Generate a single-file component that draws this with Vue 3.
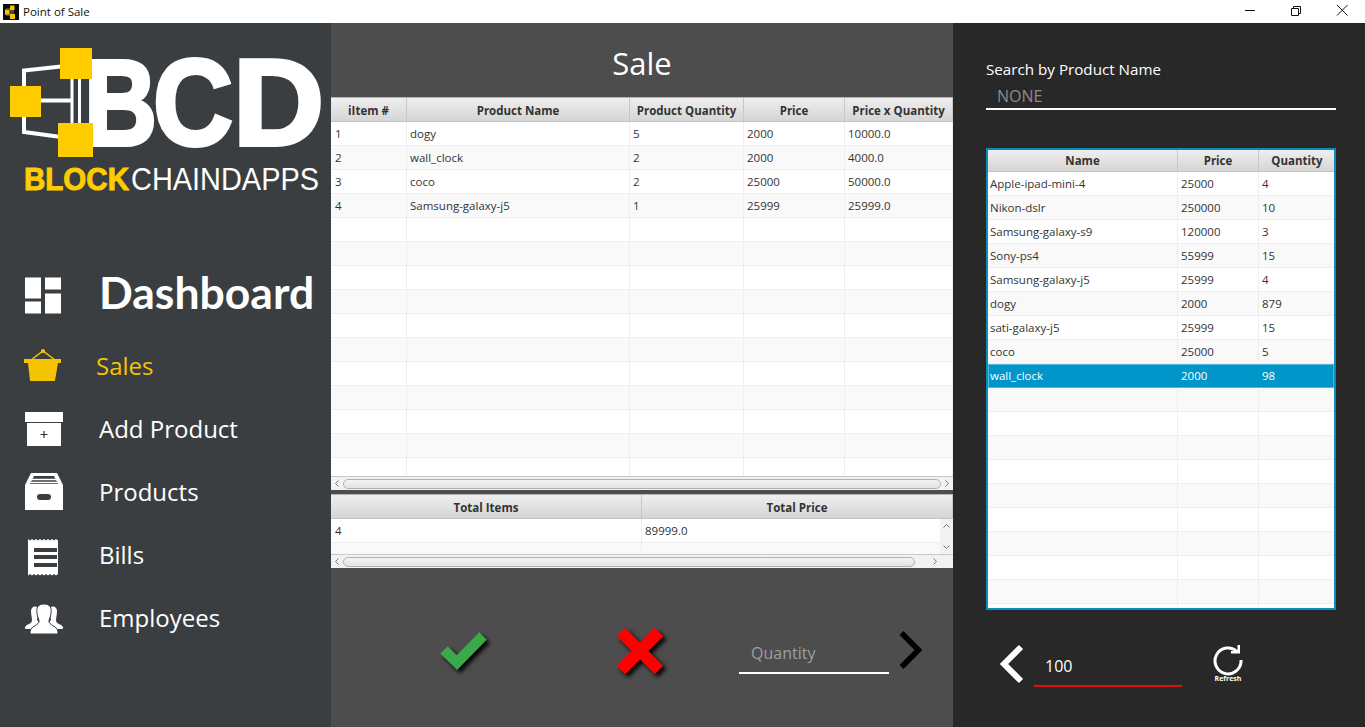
<script setup>
import { computed } from 'vue'

const navItems = [
  { key: 'dash', label: 'Dashboard' },
  { key: 'sales', label: 'Sales' },
  { key: 'add', label: 'Add Product' },
  { key: 'products', label: 'Products' },
  { key: 'bills', label: 'Bills' },
  { key: 'employees', label: 'Employees' }
]

const saleCols = [
  { title: 'iItem #', w: 76 },
  { title: 'Product Name', w: 223 },
  { title: 'Product Quantity', w: 114 },
  { title: 'Price', w: 101 },
  { title: 'Price x Quantity', w: 108 }
]
const saleRows = [
  ['1', 'dogy', '5', '2000', '10000.0'],
  ['2', 'wall_clock', '2', '2000', '4000.0'],
  ['3', 'coco', '2', '25000', '50000.0'],
  ['4', 'Samsung-galaxy-j5', '1', '25999', '25999.0']
]

const totalCols = [
  { title: 'Total Items', w: 311 },
  { title: 'Total Price', w: 311 }
]

const stockCols = [
  { title: 'Name', w: 190 },
  { title: 'Price', w: 81 },
  { title: 'Quantity', w: 77 }
]
const stockRows = [
  ['Apple-ipad-mini-4', '25000', '4'],
  ['Nikon-dslr', '250000', '10'],
  ['Samsung-galaxy-s9', '120000', '3'],
  ['Sony-ps4', '55999', '15'],
  ['Samsung-galaxy-j5', '25999', '4'],
  ['dogy', '2000', '879'],
  ['sati-galaxy-j5', '25999', '15'],
  ['coco', '25000', '5'],
  ['wall_clock', '2000', '98']
]

const gridOf = (cols) => ({ gridTemplateColumns: cols.map((c) => c.w + 'px').join(' ') })
const fill = (rows, cols, n) => {
  const out = rows.slice()
  while (out.length < n) out.push(cols.map(() => ''))
  return out
}
const saleAll = computed(() => fill(saleRows, saleCols, 15))
const stockAll = computed(() => fill(stockRows, stockCols, 19))
</script>

<template>
  <div class="window">
    <header class="titlebar">
      <svg class="app-icon" viewBox="0 0 16 16">
        <rect width="16" height="16" fill="#0b0b0b" />
        <path d="M3 5h5M3 5v6h5M8 4v8M10 4v8" stroke="#8a8a8a" stroke-width="1" fill="none" />
        <rect x="7" y="1.5" width="4.5" height="4.5" fill="#f7c600" />
        <rect x="2" y="6" width="4.5" height="4.5" fill="#f7c600" />
        <rect x="7" y="10" width="5" height="5" fill="#f7c600" />
      </svg>
      <span class="app-title">Point of Sale</span>
      <div class="win-btns">
        <svg viewBox="0 0 46 23"><path d="M18 10.5h10" stroke="#111" fill="none" /></svg>
        <svg viewBox="0 0 46 23">
          <path d="M18.5 8.5h7v7h-7zM20.5 8.5v-2h7v7h-2" stroke="#111" fill="none" />
        </svg>
        <svg viewBox="0 0 46 23"><path d="M18 5l10.500 10.500M28.500 5L18 15.500" stroke="#111" fill="none" /></svg>
      </div>
    </header>

    <div class="panes">
      <aside class="sidebar">
        <svg class="logo" viewBox="0 23 331 180">
          <path d="M61 66.500L24 70.500V132L61 137" fill="none" stroke="#fff" stroke-width="4" />
          <path d="M41 100.500H71" stroke="#fff" stroke-width="4" />
          <path d="M72 79V124M79.500 79V124" stroke="#fff" stroke-width="3" />
          <text class="logo-big" x="84" y="144.500" textLength="73" lengthAdjust="spacingAndGlyphs">B</text>
          <text class="logo-big" x="153" y="144.500" textLength="80" lengthAdjust="spacingAndGlyphs">C</text>
          <text class="logo-big" x="233" y="144.500" textLength="91" lengthAdjust="spacingAndGlyphs">D</text>
          <rect x="60" y="48" width="32" height="31" fill="#fc0" />
          <rect x="10" y="86" width="31" height="31" fill="#fc0" />
          <rect x="58" y="123" width="35" height="34" fill="#fc0" />
          <text class="logo-block" x="24" y="190" textLength="105" lengthAdjust="spacingAndGlyphs">BLOCK</text>
          <text class="logo-chain" x="131" y="190" textLength="188" lengthAdjust="spacingAndGlyphs">CHAINDAPPS</text>
        </svg>

        <nav class="nav">
          <div v-for="item in navItems" :key="item.key" class="nav-item" :class="'nav-' + item.key">
            <svg class="nav-icon" viewBox="0 0 40 40">
              <g v-if="item.key === 'dash'" fill="#fff" transform="translate(0 1.500)">
                <rect x="1" y="2" width="16" height="21" />
                <rect x="1" y="26" width="16" height="12" />
                <rect x="21" y="2" width="16" height="12" />
                <rect x="21" y="18" width="16" height="20" />
              </g>
              <g v-else-if="item.key === 'sales'" fill="#f5c400">
                <path d="M7 14L19 5L31 14" fill="none" stroke="#f5c400" stroke-width="1.500" />
                <circle cx="19" cy="5" r="2" />
                <rect x="0" y="13" width="37" height="4" />
                <path d="M4 17H34L31 34.500Q31 35 30 35H7Q6 35 6 34.500Z" />
              </g>
              <g v-else-if="item.key === 'add'" transform="translate(0 3)">
                <rect x="1" y="0" width="38" height="10" fill="#fff" />
                <rect x="3" y="11" width="34" height="23" fill="#fff" />
                <path d="M20 19v7M16.500 22.500h7" stroke="#333" stroke-width="1.200" />
              </g>
              <g v-else-if="item.key === 'products'">
                <path d="M1 13L7 1H33L39 13V38H1Z" fill="#fff" />
                <path d="M6 12L10 4H30L34 12Z" fill="#3b3e41" />
                <path d="M8 7.500H32M6.500 10.500H33.500" stroke="#fff" stroke-width="1.500" />
                <rect x="13" y="22" width="14" height="6" rx="3" fill="#3b3e41" />
              </g>
              <g v-else-if="item.key === 'bills'" transform="translate(0 2)">
                <path d="M4 2l2 1.500 2-1.500 2 1.500 2-1.500 2 1.500 2-1.500 2 1.500 2-1.500 2 1.500 2-1.500 2 1.500 2-1.500 2 1.500 2-1.500 2 1.500V37l-2 1.500-2-1.500-2 1.500-2-1.500-2 1.500-2-1.500-2 1.500-2-1.500-2 1.500-2-1.500-2 1.500-2-1.500-2 1.500-2-1.500-2 1.500Z" fill="#fff" />
                <rect x="10" y="11" width="23" height="4" fill="#3b3e41" />
                <rect x="10" y="18" width="23" height="4" fill="#3b3e41" />
                <rect x="10" y="26" width="23" height="4" fill="#3b3e41" />
              </g>
              <g v-else fill="#fff" transform="translate(0 3)">
                <path d="M7 10C7 4 15 4 15 10C15 14 13 16 13 18C13 20 15 21 16 22L10 28H2C0 28 1 25 3 24C5 23 8 22 8 19C8 17 7 14 7 10Z" />
                <path d="M33 10C33 4 25 4 25 10C25 14 27 16 27 18C27 20 25 21 24 22L30 28H38C40 28 39 25 37 24C35 23 32 22 32 19C32 17 33 14 33 10Z" />
                <path d="M20 3C26 3 28 7 27 12C27 15 25 18 25 20C25 23 28 24 31 26C33 27 34 29 34 33H6C6 29 7 27 9 26C12 24 15 23 15 20C15 18 13 15 13 12C12 7 14 3 20 3Z" stroke="#3b3e41" stroke-width="1" />
              </g>
            </svg>
            <span class="nav-label">{{ item.label }}</span>
          </div>
        </nav>
      </aside>

      <main class="center">
        <h1 class="sale-title">Sale</h1>

        <section class="tbl tbl-sale">
          <div class="tbl-head" :style="gridOf(saleCols)">
            <div v-for="c in saleCols" :key="c.title" class="th">{{ c.title }}</div>
          </div>
          <div class="tbl-body">
            <div v-for="(row, i) in saleAll" :key="i" class="tr" :class="{ odd: i % 2 }" :style="gridOf(saleCols)">
              <div v-for="(cell, j) in row" :key="j" class="td">{{ cell }}</div>
            </div>
          </div>
          <div class="hscroll">
            <svg class="arrow" viewBox="0 0 12 13"><path d="M7.500 3.500L4.500 6.500L7.500 9.500" /></svg>
            <div class="thumb"></div>
            <svg class="arrow" viewBox="0 0 12 13"><path d="M4.500 3.500L7.500 6.500L4.500 9.500" /></svg>
          </div>
        </section>

        <section class="tbl tbl-total">
          <div class="tbl-head" :style="gridOf(totalCols)">
            <div v-for="c in totalCols" :key="c.title" class="th">{{ c.title }}</div>
          </div>
          <div class="total-mid">
            <div class="total-rows">
              <div class="tr" :style="gridOf(totalCols)">
                <div class="td">4</div>
                <div class="td">89999.0</div>
              </div>
              <div class="tr odd" :style="gridOf(totalCols)">
                <div class="td"></div>
                <div class="td"></div>
              </div>
            </div>
            <div class="vscroll">
              <svg class="arrow" viewBox="0 0 13 12"><path d="M3.500 7.500L6.500 4.500L9.500 7.500" /></svg>
              <svg class="arrow" viewBox="0 0 13 12"><path d="M3.500 4.500L6.500 7.500L9.500 4.500" /></svg>
            </div>
          </div>
          <div class="hscroll hscroll-short">
            <svg class="arrow" viewBox="0 0 12 13"><path d="M7.500 3.500L4.500 6.500L7.500 9.500" /></svg>
            <div class="thumb"></div>
            <svg class="arrow" viewBox="0 0 12 13"><path d="M4.500 3.500L7.500 6.500L4.500 9.500" /></svg>
          </div>
        </section>

        <div class="actions">
          <svg class="btn-check" viewBox="0 0 50 50">
            <path d="M5 23L18 35.500L44 9" fill="none" stroke="#3aa94a" stroke-width="10.500" />
          </svg>
          <svg class="btn-cross" viewBox="0 0 52 52">
            <path d="M6 6L44 44M44 6L6 44" fill="none" stroke="#f00" stroke-width="12" />
          </svg>
          <div class="qty">Quantity</div>
          <svg class="btn-next" viewBox="0 0 26 40">
            <path d="M2.500 3L19.500 20L2.500 37" fill="none" stroke="#000" stroke-width="5.500" />
          </svg>
        </div>
      </main>

      <aside class="stock">
        <div class="search-label">Search by Product Name</div>
        <div class="search-input">NONE</div>

        <section class="tbl tbl-stock">
          <div class="tbl-head" :style="gridOf(stockCols)">
            <div v-for="c in stockCols" :key="c.title" class="th">{{ c.title }}</div>
          </div>
          <div class="tbl-body">
            <div
              v-for="(row, i) in stockAll"
              :key="i"
              class="tr"
              :class="{ odd: i % 2, selected: row[0] === 'wall_clock' }"
              :style="gridOf(stockCols)"
            >
              <div v-for="(cell, j) in row" :key="j" class="td">{{ cell }}</div>
            </div>
          </div>
        </section>

        <div class="stock-foot">
          <svg class="btn-prev" viewBox="0 0 26 40">
            <path d="M22 3L5 20L22 37" fill="none" stroke="#fff" stroke-width="6" />
          </svg>
          <div class="amount">100</div>
          <div class="refresh">
            <svg viewBox="0 0 32 32">
              <path d="M25 7.500A13 13 0 1 0 29 16" fill="none" stroke="#fff" stroke-width="3" />
              <path d="M19 9.500H28V1L25.500 1V7H19Z" fill="#fff" />
            </svg>
            <span>Refresh</span>
          </div>
        </div>
      </aside>
    </div>
  </div>
</template>

<style>
html,
body {
  margin: 0;
  overflow: hidden;
}
</style>

<style scoped>
.window {
  width: 1365px;
  height: 727px;
  display: flex;
  flex-direction: column;
  font-family: "Open Sans", "Liberation Sans", sans-serif;
}

.titlebar {
  height: 23px;
  flex: none;
  display: flex;
  align-items: center;
  background: #fff;
  padding-left: 3px;
}
.app-icon {
  width: 16px;
  height: 16px;
}
.app-title {
  margin-left: 4px;
  font-size: 11.500px;
  color: #111;
}
.win-btns {
  margin-left: auto;
  display: flex;
}
.win-btns svg {
  width: 46px;
  height: 23px;
}

.panes {
  flex: 1;
  display: flex;
  min-height: 0;
}

.sidebar {
  width: 331px;
  flex: none;
  background: #3b3e41;
  display: flex;
  flex-direction: column;
}
.logo {
  width: 331px;
  height: 180px;
  display: block;
  flex: none;
}
.logo-big {
  font-family: "Liberation Sans", sans-serif;
  font-weight: 700;
  font-size: 123px;
  fill: #fff;
  stroke: #fff;
  stroke-width: 4px;
}
.logo-block {
  font-family: "Liberation Sans", sans-serif;
  font-weight: 700;
  font-size: 32px;
  fill: #fc0;
  stroke: #fc0;
  stroke-width: 1px;
}
.logo-chain {
  font-family: "Liberation Sans", sans-serif;
  font-size: 32px;
  fill: #fff;
}

.nav {
  display: flex;
  flex-direction: column;
  padding-top: 50px;
}
.nav-item {
  height: 63px;
  display: flex;
  align-items: center;
  padding-left: 24px;
  color: #fff;
  font-size: 24px;
}
.nav-icon {
  width: 40px;
  height: 40px;
  flex: none;
  overflow: visible;
}
.nav-label {
  margin-left: 35px;
}
.nav-dash {
  height: 81px;
}
.nav-dash .nav-label {
  font-family: Lato, sans-serif;
  font-weight: 700;
  font-size: 44.500px;
  padding-bottom: 4px;
}
.nav-sales {
  color: #f5c400;
}
.nav-sales .nav-label {
  margin-left: 32px;
}

.center {
  width: 622px;
  flex: none;
  background: #4d4d4d;
  display: flex;
  flex-direction: column;
}
.sale-title {
  margin: 0;
  height: 74px;
  line-height: 80px;
  text-align: center;
  font-weight: 400;
  font-size: 31px;
  color: #fff;
}

.tbl {
  background: #fff;
  display: flex;
  flex-direction: column;
  font-size: 11.500px;
  color: #333;
  overflow: hidden;
}
.tbl-sale {
  height: 392px;
  border-top: 1px solid #b5b5b5;
  flex: none;
}
.tbl-total {
  height: 73px;
  margin-top: 4px;
  border-top: 1px solid #b5b5b5;
  flex: none;
}
.tbl-head {
  display: grid;
  height: 24px;
  flex: none;
}
.th {
  display: flex;
  align-items: center;
  justify-content: center;
  padding-top: 1px;
  font-weight: 700;
  color: #333;
  background: linear-gradient(#efefef, #d5d5d5);
  border-right: 1px solid #c8c8c8;
  border-bottom: 1px solid #c2c2c2;
  box-sizing: border-box;
  white-space: nowrap;
}
.tbl-body {
  flex: 1;
  min-height: 0;
  overflow: hidden;
}
.tr {
  display: grid;
  height: 24px;
  background: #fff;
}
.tr.odd {
  background: #f9f9f9;
}
.td {
  padding-left: 3px;
  line-height: 23px;
  box-sizing: border-box;
  border-right: 1px solid #eee;
  border-bottom: 1px solid #eee;
  white-space: nowrap;
  overflow: hidden;
}
.td:first-child {
  padding-left: 4px;
}
.tbl-stock .td,
.tbl-stock .td:first-child {
  padding-left: 2px;
}
.tbl-stock .td:nth-child(2),
.tbl-stock .td:nth-child(3) {
  padding-left: 3px;
}
.tbl-stock .th {
  padding-top: 0;
}
.tr.selected {
  background: #0096c9;
  color: #fff;
  box-shadow: inset 0 0 0 1px #4fb9dc;
}
.tr.selected .td {
  border-color: transparent;
}

.hscroll {
  height: 14px;
  flex: none;
  display: flex;
  align-items: center;
  background: #f2f2f2;
  border-top: 1px solid #c8c8c8;
  box-sizing: border-box;
}
.hscroll .thumb {
  flex: 1;
  height: 8px;
  border: 1px solid #b0b0b0;
  border-radius: 5px;
  background: linear-gradient(#f4f4f4, #e2e2e2);
}
.hscroll-short {
  padding-right: 1px;
}
.hscroll-short .thumb {
  flex: none;
  width: 570px;
}
.hscroll-short .arrow:last-child {
  margin-left: 14px;
}
.arrow {
  width: 12px;
  height: 13px;
  flex: none;
}
.arrow path {
  fill: none;
  stroke: #777;
  stroke-width: 1;
}
.total-mid {
  flex: 1;
  min-height: 0;
  display: flex;
}
.total-rows {
  flex: 1;
  min-width: 0;
  overflow: hidden;
}
.vscroll {
  width: 13px;
  flex: none;
  display: flex;
  flex-direction: column;
  justify-content: space-between;
  background: #f2f2f2;
  padding: 1px 0;
}
.vscroll .arrow {
  width: 13px;
  height: 12px;
}

.actions {
  flex: 1;
  display: flex;
  align-items: flex-start;
  padding: 60px 0 0 108px;
}
.btn-check {
  width: 50px;
  height: 50px;
  filter: drop-shadow(3px 3px 2px #000);
  flex: none;
  margin-top: -1px;
}
.btn-cross {
  width: 52px;
  height: 52px;
  margin-left: 126px;
  margin-top: -2px;
  filter: drop-shadow(3px 3px 2px #000);
  flex: none;
}
.qty {
  width: 150px;
  height: 46px;
  margin-left: 72px;
  box-sizing: border-box;
  padding: 13px 0 0 12px;
  border-bottom: 2px solid #fff;
  font-size: 16px;
  color: #9aa0a6;
  line-height: 24px;
  flex: none;
}
.btn-next {
  width: 26px;
  height: 40px;
  margin: 2px 0 0 10px;
  flex: none;
}

.stock {
  flex: 1;
  background: #282828;
  padding: 36px 0 0 33px;
  display: flex;
  flex-direction: column;
  align-items: flex-start;
}
.search-label {
  height: 20px;
  line-height: 20px;
  font-size: 15.200px;
  color: #fff;
}
.search-input {
  width: 350px;
  height: 31px;
  box-sizing: border-box;
  padding: 6px 0 0 11px;
  border-bottom: 2px solid #fff;
  font-size: 16px;
  line-height: 22px;
  color: #8c8c8c;
}
.tbl-stock {
  width: 350px;
  height: 462px;
  margin-top: 38px;
  border: 2px solid #0a8db8;
  box-sizing: border-box;
  flex: none;
}
.tbl-stock .tbl-head {
  height: 22px;
}

.stock-foot {
  width: 350px;
  margin-top: 34px;
  display: flex;
  align-items: flex-start;
}
.btn-prev {
  width: 26px;
  height: 40px;
  margin-left: 13px;
  flex: none;
}
.amount {
  width: 148px;
  height: 43px;
  margin-left: 9px;
  box-sizing: border-box;
  padding: 10px 0 0 11px;
  border-bottom: 2px solid #e01010;
  font-size: 16px;
  line-height: 24px;
  color: #fff;
  flex: none;
}
.refresh {
  margin-left: 30px;
  width: 32px;
  display: flex;
  flex-direction: column;
  align-items: center;
  color: #fff;
}
.refresh svg {
  width: 32px;
  height: 32px;
  margin-bottom: -2px;
}
.refresh span {
  font-size: 7px;
  font-weight: 700;
  line-height: 9px;
  white-space: nowrap;
}
</style>
